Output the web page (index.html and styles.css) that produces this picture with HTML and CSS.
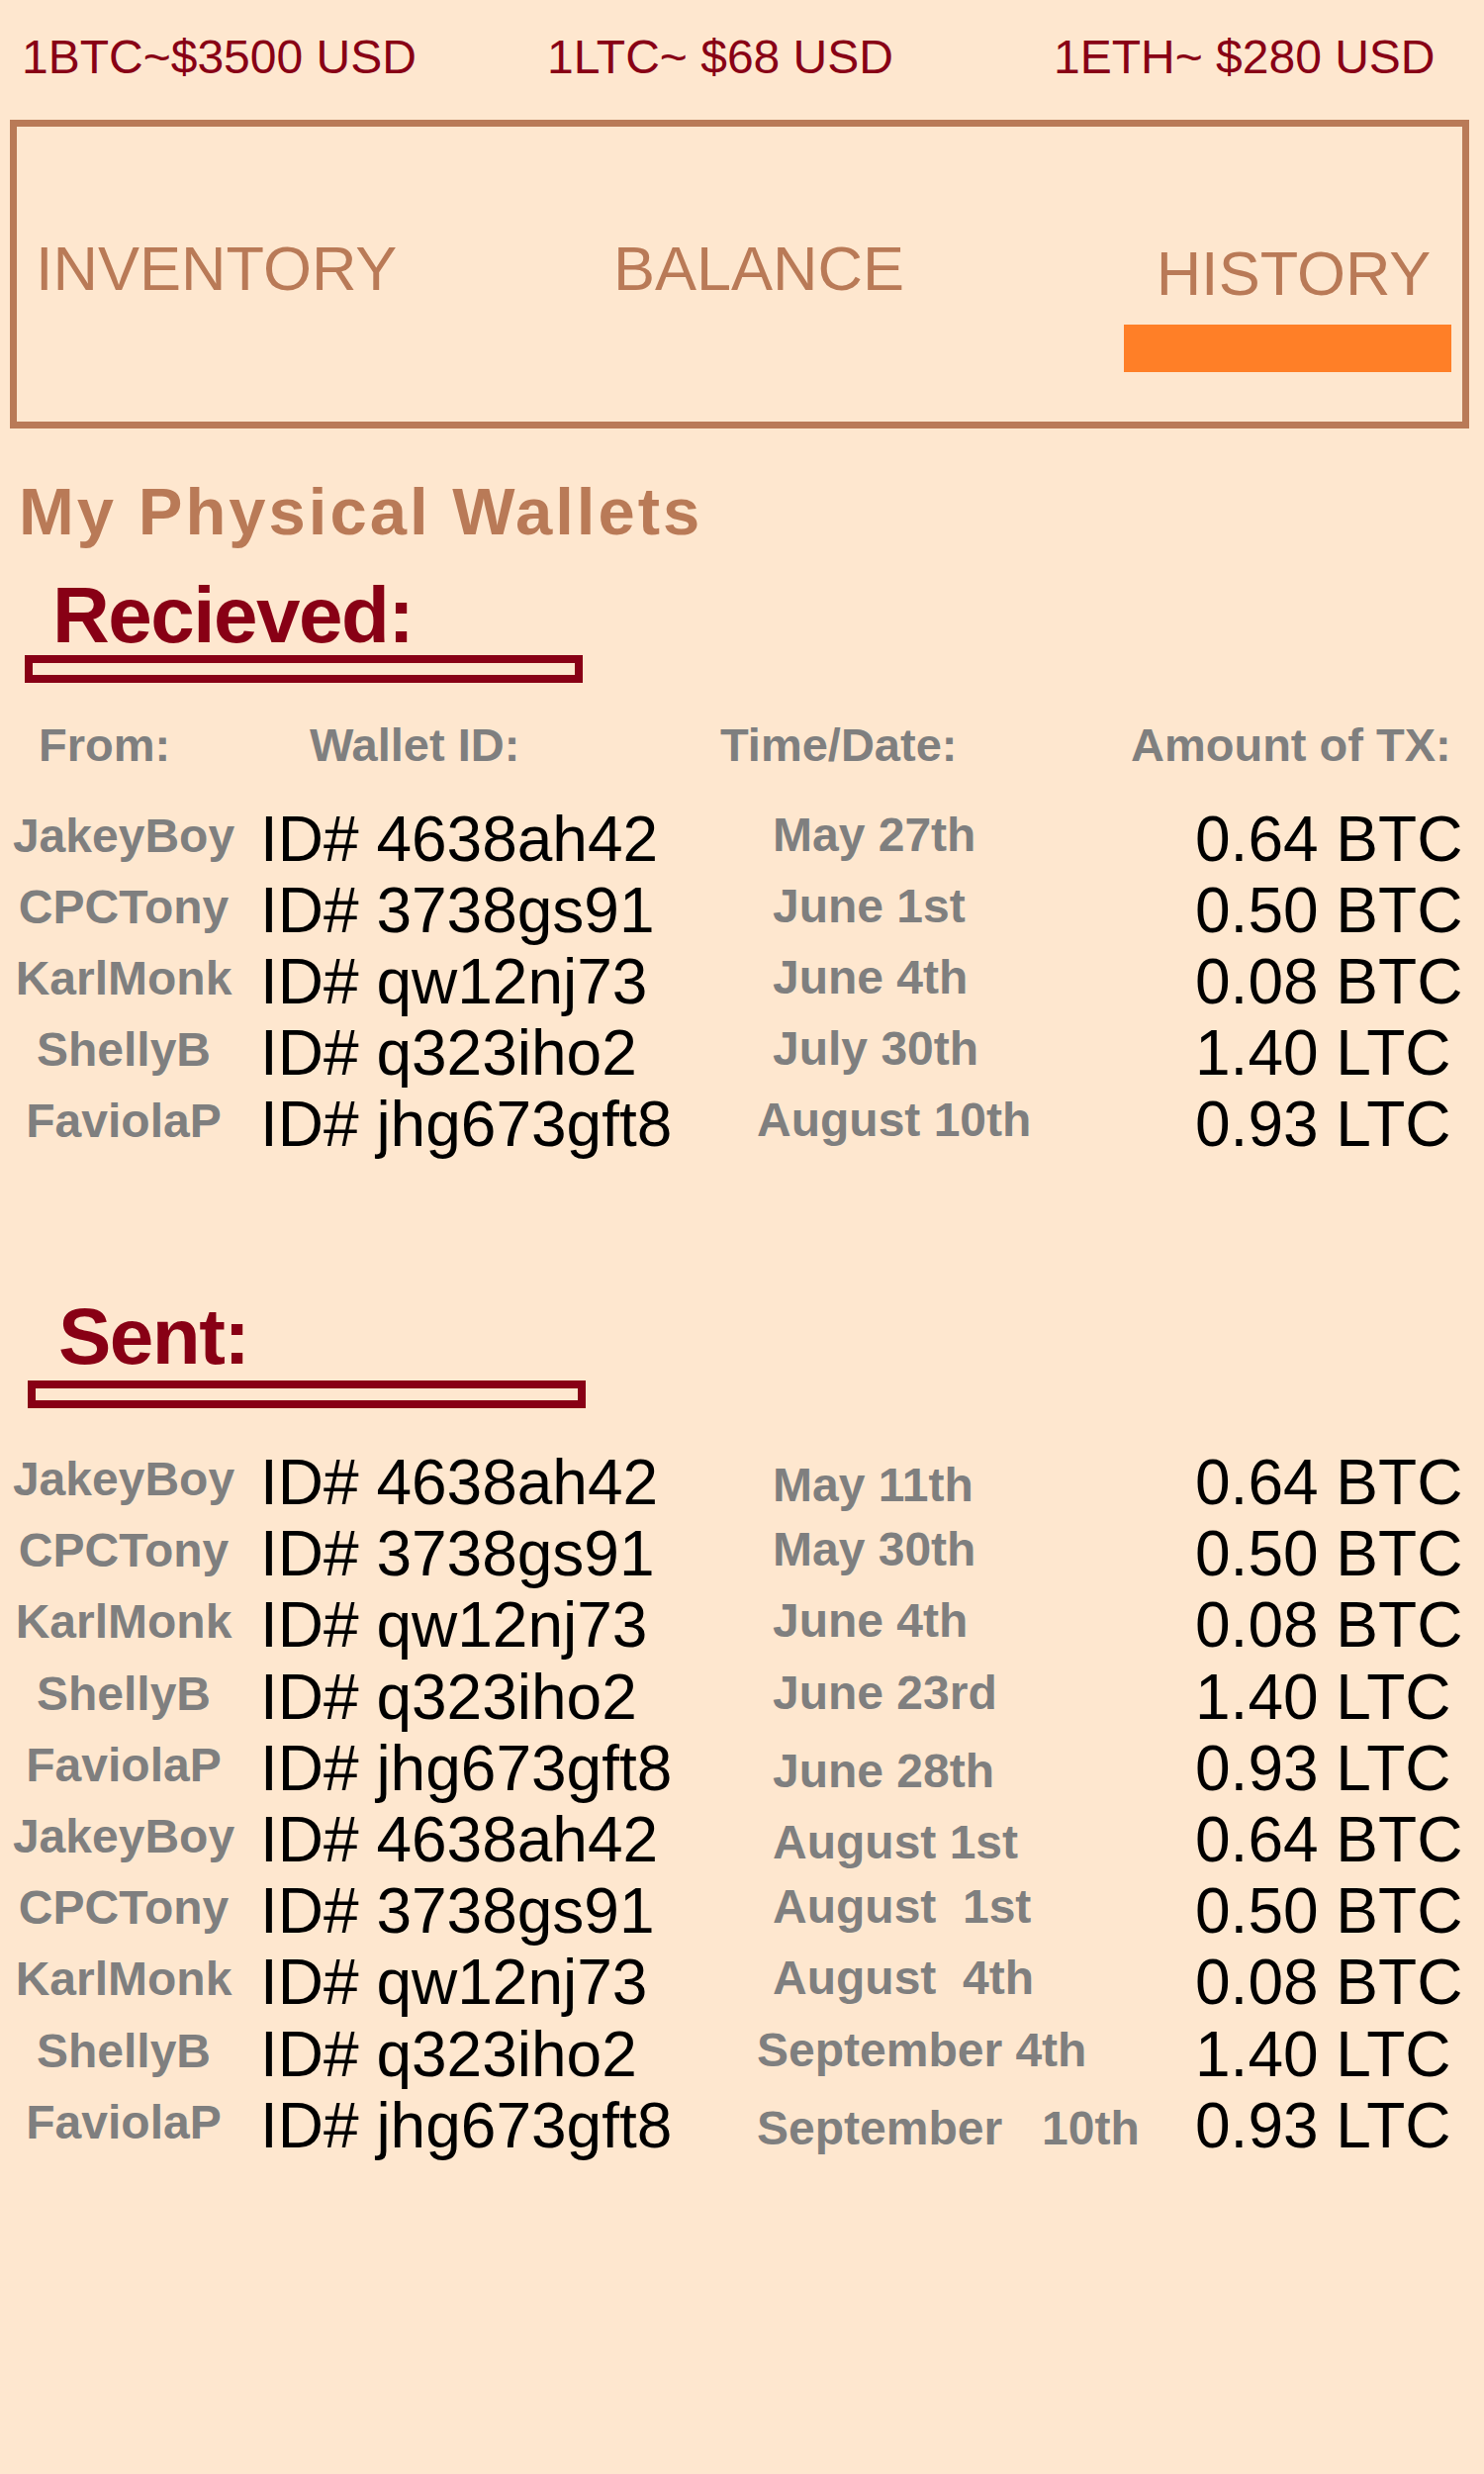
FILE: index.html
```html
<!DOCTYPE html>
<html lang="en">
<head>
    <meta charset="UTF-8">
    <meta name="viewport" content="width=device-width, initial-scale=1.0">
    <title>My Physical Wallets - History</title>
    <link rel="stylesheet" href="styles.css">
</head>
<body>
    <div class="rates">
        <span>1BTC~$3500 USD</span>
        <span>1LTC~ $68 USD</span>
        <span>1ETH~ $280 USD</span>
    </div>

    <nav class="tabs">
        <div class="tab">INVENTORY</div>
        <div class="tab">BALANCE</div>
        <div class="tab active">
            <span class="tab-label">HISTORY</span>
            <span class="tab-bar"></span>
        </div>
    </nav>

    <h1 class="title">My Physical Wallets</h1>

    <section class="tx received">
        <h2 class="tx-title">Recieved:</h2>
        <div class="tx-rule"></div>
        <div class="tx-head">
            <span>From:</span>
            <span>Wallet ID:</span>
            <span>Time/Date:</span>
            <span>Amount of TX:</span>
        </div>
        <div class="tx-list">
            <div class="tx-row"><span class="who">JakeyBoy</span><span class="wallet">ID# 4638ah42</span><span class="when">May 27th</span><span class="amt">0.64 BTC</span></div>
            <div class="tx-row"><span class="who">CPCTony</span><span class="wallet">ID# 3738gs91</span><span class="when">June 1st</span><span class="amt">0.50 BTC</span></div>
            <div class="tx-row"><span class="who">KarlMonk</span><span class="wallet">ID# qw12nj73</span><span class="when">June 4th</span><span class="amt">0.08 BTC</span></div>
            <div class="tx-row"><span class="who">ShellyB</span><span class="wallet">ID# q323iho2</span><span class="when">July 30th</span><span class="amt">1.40 LTC</span></div>
            <div class="tx-row"><span class="who">FaviolaP</span><span class="wallet">ID# jhg673gft8</span><span class="when wide">August 10th</span><span class="amt">0.93 LTC</span></div>
        </div>
    </section>

    <section class="tx sent">
        <h2 class="tx-title">Sent:</h2>
        <div class="tx-rule"></div>
        <div class="tx-list">
            <div class="tx-row"><span class="who">JakeyBoy</span><span class="wallet">ID# 4638ah42</span><span class="when low">May 11th</span><span class="amt">0.64 BTC</span></div>
            <div class="tx-row"><span class="who">CPCTony</span><span class="wallet">ID# 3738gs91</span><span class="when">May 30th</span><span class="amt">0.50 BTC</span></div>
            <div class="tx-row"><span class="who">KarlMonk</span><span class="wallet">ID# qw12nj73</span><span class="when">June 4th</span><span class="amt">0.08 BTC</span></div>
            <div class="tx-row"><span class="who">ShellyB</span><span class="wallet">ID# q323iho2</span><span class="when">June 23rd</span><span class="amt">1.40 LTC</span></div>
            <div class="tx-row"><span class="who">FaviolaP</span><span class="wallet">ID# jhg673gft8</span><span class="when low">June 28th</span><span class="amt">0.93 LTC</span></div>
            <div class="tx-row"><span class="who">JakeyBoy</span><span class="wallet">ID# 4638ah42</span><span class="when low">August 1st</span><span class="amt">0.64 BTC</span></div>
            <div class="tx-row"><span class="who">CPCTony</span><span class="wallet">ID# 3738gs91</span><span class="when">August  1st</span><span class="amt">0.50 BTC</span></div>
            <div class="tx-row"><span class="who">KarlMonk</span><span class="wallet">ID# qw12nj73</span><span class="when">August  4th</span><span class="amt">0.08 BTC</span></div>
            <div class="tx-row"><span class="who">ShellyB</span><span class="wallet">ID# q323iho2</span><span class="when wide">September 4th</span><span class="amt">1.40 LTC</span></div>
            <div class="tx-row"><span class="who">FaviolaP</span><span class="wallet">ID# jhg673gft8</span><span class="when wide low">September   10th</span><span class="amt">0.93 LTC</span></div>
        </div>
    </section>
</body>
</html>
```

FILE: styles.css
```css
html {
    background: #fee7cf;
}

body {
    margin: 0;
    min-height: 2500px;
    background: #fee7cf;
    font-family: "Liberation Sans", Arial, sans-serif;
}

/* exchange rates strip */
.rates {
    display: grid;
    grid-template-columns: 531px 512px auto;
    padding: 34px 0 0 22px;
    font-size: 48px;
    line-height: 1;
    color: #880015;
}

/* tab box */
.tabs {
    display: grid;
    grid-template-columns: 584px 516px 331px;
    box-sizing: border-box;
    width: 1475px;
    height: 312px;
    margin: 39px 0 0 10px;
    padding: 112px 0 0 19px;
    border: 7px solid #b97a57;
    color: #b97a57;
    font-size: 63px;
    line-height: 1;
}
.tab.active {
    display: flex;
    flex-direction: column;
    align-items: center;
    padding-top: 5px;
}
.tab-label {
    padding-left: 12px;
}
.tab-bar {
    width: 331px;
    height: 48px;
    margin-top: 20px;
    background: #ff7f27;
}

.title {
    margin: 50px 0 0 19px;
    font-size: 67px;
    letter-spacing: 3px;
    line-height: 1;
    color: #b97a57;
}

/* transaction sections */
.tx-title {
    margin: 32px 0 0 53px;
    font-size: 80px;
    letter-spacing: -1.5px;
    line-height: 1;
    color: #880015;
}
.tx-rule {
    box-sizing: border-box;
    width: 564px;
    height: 28px;
    margin-left: 25px;
    border: 8px solid #880015;
}
.sent .tx-title {
    margin: 135px 0 0 59px;
}
.sent .tx-rule {
    margin: 4px 0 0 28px;
}

.tx-head {
    display: grid;
    grid-template-columns: 274px 415px 415px auto;
    margin: 39px 0 40px;
    padding-left: 39px;
    font-size: 47px;
    font-weight: bold;
    line-height: 1;
    color: #7f7f7f;
}

.sent .tx-list {
    margin-top: 43px;
}
.tx-row {
    display: grid;
    grid-template-columns: 263px 518px 427px 1fr;
    align-items: start;
    height: 72px;
    line-height: 1;
}
.sent .tx-row {
    height: 72.2px;
}
.who,
.when {
    font-size: 48px;
    font-weight: bold;
    color: #7f7f7f;
}
.who {
    padding: 5px 13px 0 0;
    text-align: center;
}
.when {
    padding-top: 4px;
    white-space: pre;
}
.when.wide {
    margin-left: -16px;
}
.when.low {
    padding-top: 11px;
}
.wallet,
.amt {
    font-size: 64px;
    color: #000;
}
```
